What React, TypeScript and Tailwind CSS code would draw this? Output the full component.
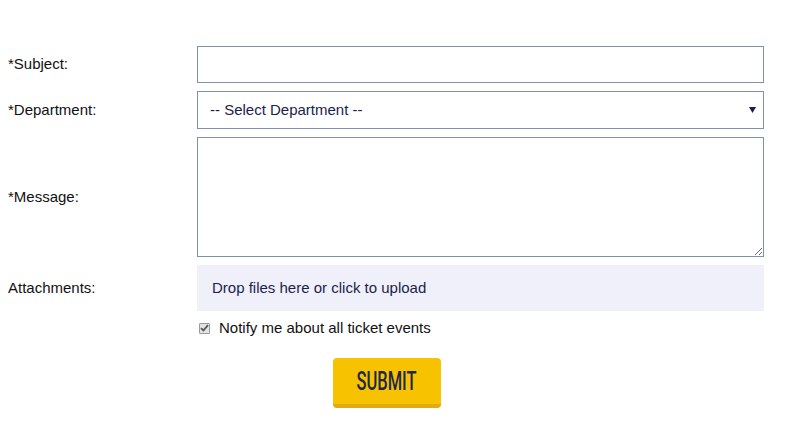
export default function App() {
  const labelCls = "text-[15px] text-[#111]";
  const boxCls =
    "block w-full border border-[#7f92ab] bg-white outline-none text-[15px] text-[#1b1e4a]";

  return (
    <div
      className="w-[800px] h-[421px] bg-white pl-[8px] pt-[46px]"
      style={{ fontFamily: '"Liberation Sans", Arial, sans-serif' }}
    >
      <div className="grid grid-cols-[189px_567px] gap-y-[8px] items-center">
        <label className={labelCls}>*Subject:</label>
        <input type="text" className={`${boxCls} h-[37px] px-[12px]`} />

        <label className={labelCls}>*Department:</label>
        <div className="relative h-[38px]">
          <select
            className={`${boxCls} h-[38px] pl-[12px] appearance-none rounded-none`}
            defaultValue=""
          >
            <option value="">-- Select Department --</option>
          </select>
          <svg
            className="absolute right-[8px] top-[16px] pointer-events-none"
            width="7"
            height="6"
            viewBox="0 0 7 6"
          >
            <path d="M0 0H7L3.5 6Z" fill="#1b1e4a" />
          </svg>
        </div>

        <label className={labelCls}>*Message:</label>
        <textarea className={`${boxCls} h-[120px] px-[12px] py-[8px]`} />

        <label className={labelCls}>Attachments:</label>
        <div className="h-[46px] bg-[#f0f0fb] flex items-center pl-[15px] text-[15px] text-[#1b1e4a]">
          Drop files here or click to upload
        </div>

        <div />
        <label className="flex items-center gap-[9px] pl-[2px] h-[18px] text-[15px] text-[#111]">
          <span className="w-[11px] h-[11px] border border-[#9a9a9a] bg-[#e3e3e3] rounded-[1px] flex items-center justify-center">
            <svg width="9" height="8" viewBox="0 0 9 8">
              <path
                d="M1 4.2L3.4 6.5L8 1.2"
                stroke="#555"
                strokeWidth="1.8"
                fill="none"
              />
            </svg>
          </span>
          Notify me about all ticket events
        </label>

        <div />
        <div className="pt-[13px]">
          <button className="ml-[136px] w-[108px] h-[50px] rounded-[4px] bg-[#f7c300] border-b-[4px] border-[#e0aa12] text-[#1d2747] flex items-center justify-center">
            <span
              className="inline-block text-[25px] font-medium scale-x-[0.66] leading-none"
              style={{ fontFamily: "Roboto, sans-serif" }}
            >
              SUBMIT
            </span>
          </button>
        </div>
      </div>
    </div>
  );
}
